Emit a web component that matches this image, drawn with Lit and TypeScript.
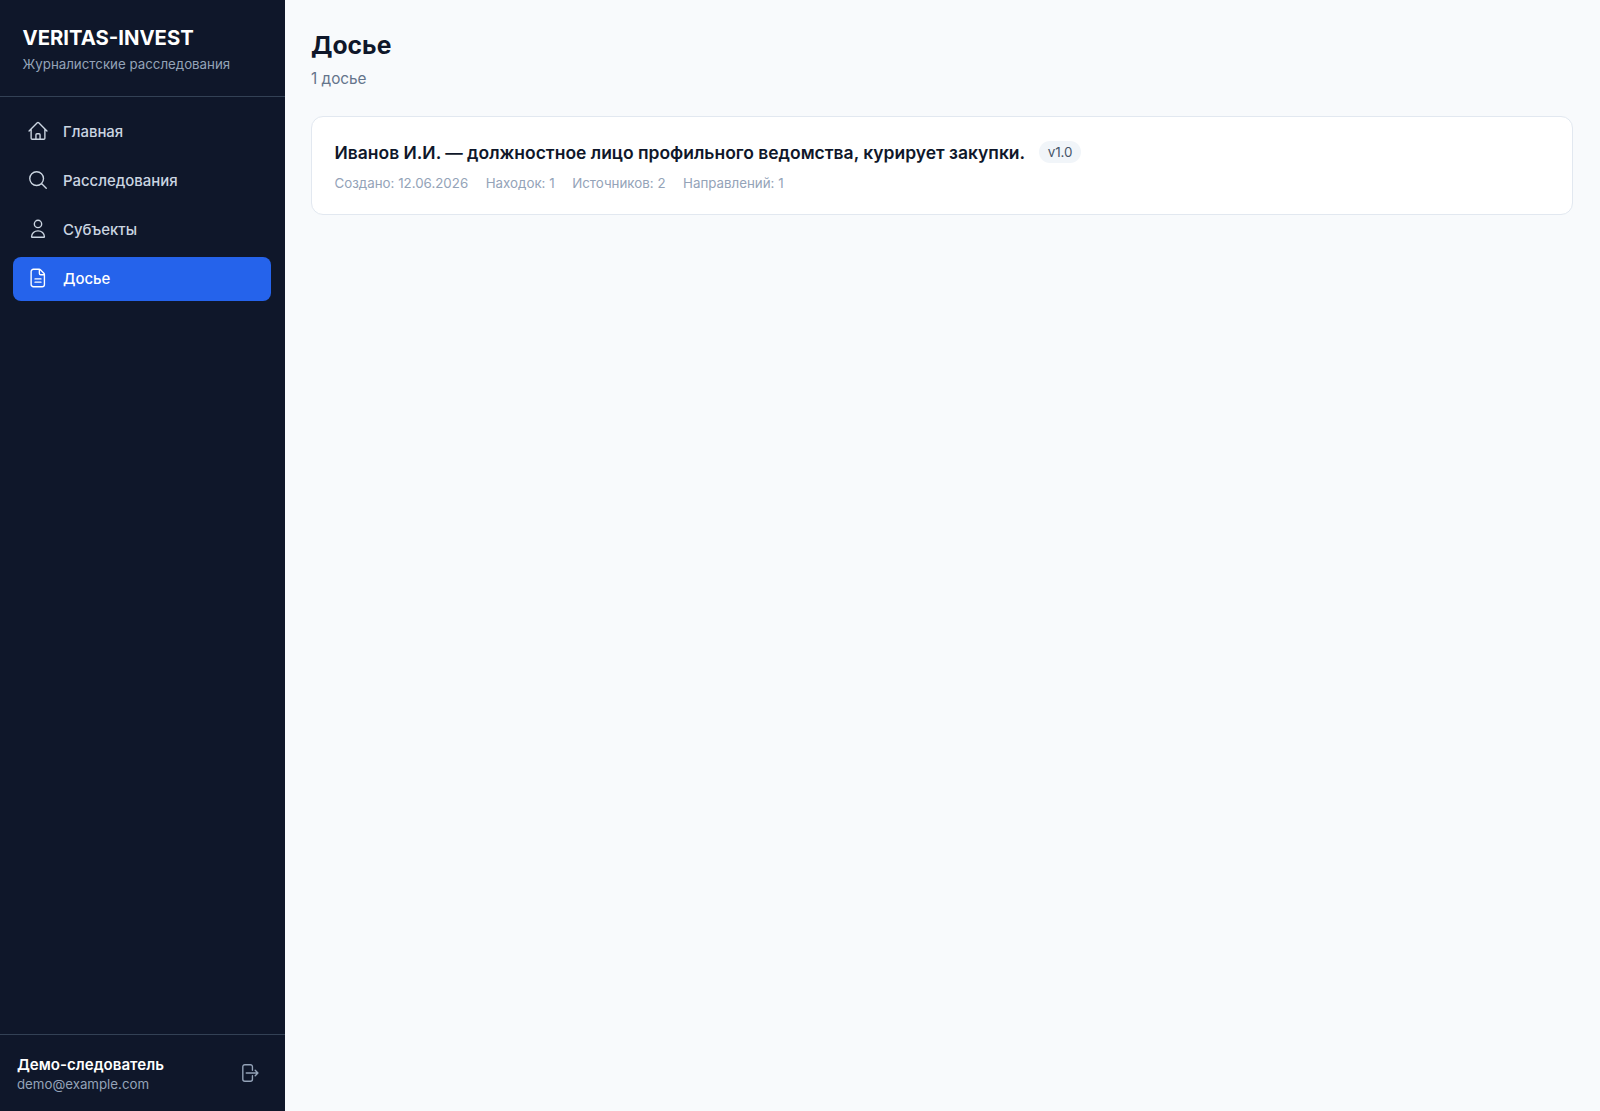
import { LitElement, html, svg, css } from "lit";
import { customElement } from "lit/decorators.js";

const icons = {
  home: svg`<path d="M2.25 12l8.95-8.95a1.125 1.125 0 011.59 0L21.75 12M4.5 9.75v10.125c0 .621.504 1.125 1.125 1.125H9.75v-4.875c0-.621.504-1.125 1.125-1.125h2.25c.621 0 1.125.504 1.125 1.125V21h4.125c.621 0 1.125-.504 1.125-1.125V9.75M8.25 21h8.25"/>`,
  search: svg`<path d="M21 21l-5.197-5.197m0 0A7.5 7.5 0 105.196 5.196a7.5 7.5 0 0010.607 10.607z"/>`,
  user: svg`<path d="M16 6.5a4 4 0 11-8 0 4 4 0 018 0zM5 20.4c0-3.8 3.1-6.4 7-6.4s7 2.6 7 6.4c0 .4-.3.6-.6.6H5.6c-.3 0-.6-.2-.6-.6z"/>`,
  doc: svg`<path d="M7 2.5h6.2c.5 0 1 .2 1.4.6l3.8 3.8c.4.4.6.9.6 1.4v10.7a2.5 2.5 0 01-2.5 2.5H7a2.5 2.5 0 01-2.5-2.5V5A2.5 2.5 0 017 2.5zM13.5 2.8V7a1.5 1.5 0 001.5 1.5h4M8.75 13h6.5M8.75 16.5h6.5"/>`,
  logout: svg`<path d="M15.75 9V5.25A2.25 2.25 0 0013.5 3h-6a2.25 2.25 0 00-2.25 2.25v13.5A2.25 2.25 0 007.5 21h6a2.25 2.25 0 002.25-2.25V15m3 0l3-3m0 0l-3-3m3 3H9"/>`,
};

const icon = (k: keyof typeof icons) =>
  html`<svg class="icon" viewBox="0 0 24 24" fill="none" stroke="currentColor" stroke-width="1.5" stroke-linecap="round" stroke-linejoin="round">${icons[k]}</svg>`;

@customElement("app-root")
export class AppRoot extends LitElement {
  static styles = css`
    :host {
      display: flex;
      height: 1111px;
      background: #f8fafc;
      font-family: Inter, "Liberation Sans", sans-serif;
      overflow: hidden;
    }
    .side {
      width: 285px;
      flex: none;
      background: #0f172a;
      color: #fff;
      display: flex;
      flex-direction: column;
      box-sizing: border-box;
    }
    .brand {
      height: 97px;
      box-sizing: border-box;
      padding: 24px 22.5px 0;
      border-bottom: 1px solid #334155;
    }
    .brand-name {
      font-size: 20.3px;
      line-height: 27px;
      font-weight: 700;
    }
    .brand-sub {
      font-size: 13.3px;
      line-height: 18px;
      margin-top: 4px;
      color: #94a3b8;
    }
    nav {
      flex: 1;
      padding: 12.5px 14px 12px 13px;
      display: flex;
      flex-direction: column;
      gap: 5px;
    }
    .item {
      height: 44px;
      box-sizing: border-box;
      border-radius: 8px;
      padding: 0 0 1px 14px;
      display: flex;
      align-items: center;
      gap: 14px;
      font-size: 14.95px;
      font-weight: 500;
      color: #cbd5e1;
    }
    .item span {
      position: relative;
      top: 1px;
    }
    .item.active {
      background: #2563eb;
      color: #fff;
    }
    .icon {
      width: 22px;
      height: 22px;
      flex: none;
    }
    .foot {
      height: 77px;
      box-sizing: border-box;
      border-top: 1px solid #334155;
      padding: 1px 17px 0 17px;
      display: flex;
      align-items: center;
      justify-content: space-between;
    }
    .foot-name {
      font-size: 15.1px;
      line-height: 20px;
      font-weight: 600;
    }
    .foot-mail {
      font-size: 13.27px;
      line-height: 18px;
      color: #94a3b8;
    }
    .logout {
      color: #94a3b8;
      display: flex;
      padding: 8px;
      position: relative;
      top: -1px;
    }
    main {
      flex: 1;
      min-width: 0;
      padding: 27px 27px 26px 26px;
    }
    h1 {
      margin: 0;
      font-size: 24.7px;
      line-height: 36px;
      font-weight: 700;
      color: #0f172a;
    }
    .count {
      font-size: 15.3px;
      line-height: 22px;
      margin-top: 4.5px;
      color: #64748b;
    }
    .card {
      margin-top: 26px;
      height: 99px;
      box-sizing: border-box;
      background: #fff;
      border: 1px solid #e2e8f0;
      border-radius: 12px;
      padding: 22.5px 22.5px 0;
    }
    .title-row {
      display: flex;
      align-items: center;
      gap: 14px;
    }
    .title {
      font-size: 17.48px;
      line-height: 27px;
      font-weight: 600;
      color: #0f172a;
    }
    .badge {
      font-size: 13.4px;
      line-height: 18px;
      padding: 2px 8.5px 2.5px;
      border-radius: 999px;
      background: #f1f5f9;
      color: #475569;
      position: relative;
      top: -0.5px;
    }
    .meta {
      display: flex;
      gap: 17.5px;
      margin-top: 8px;
      font-size: 13.33px;
      line-height: 18px;
      color: #94a3b8;
    }
  `;

  render() {
    const nav: [keyof typeof icons, string, boolean][] = [
      ["home", "Главная", false],
      ["search", "Расследования", false],
      ["user", "Субъекты", false],
      ["doc", "Досье", true],
    ];
    return html`
      <aside class="side">
        <div class="brand">
          <div class="brand-name">VERITAS-INVEST</div>
          <div class="brand-sub">Журналистские расследования</div>
        </div>
        <nav>
          ${nav.map(([k, t, a]) => html`<div class="item ${a ? "active" : ""}">${icon(k)}<span>${t}</span></div>`)}
        </nav>
        <div class="foot">
          <div>
            <div class="foot-name">Демо-следователь</div>
            <div class="foot-mail">demo@example.com</div>
          </div>
          <div class="logout">${icon("logout")}</div>
        </div>
      </aside>
      <main>
        <h1>Досье</h1>
        <div class="count">1 досье</div>
        <div class="card">
          <div class="title-row">
            <span class="title">Иванов И.И. — должностное лицо профильного ведомства, курирует закупки.</span>
            <span class="badge">v1.0</span>
          </div>
          <div class="meta">
            <span>Создано: 12.06.2026</span>
            <span>Находок: 1</span>
            <span>Источников: 2</span>
            <span>Направлений: 1</span>
          </div>
        </div>
      </main>
    `;
  }
}
